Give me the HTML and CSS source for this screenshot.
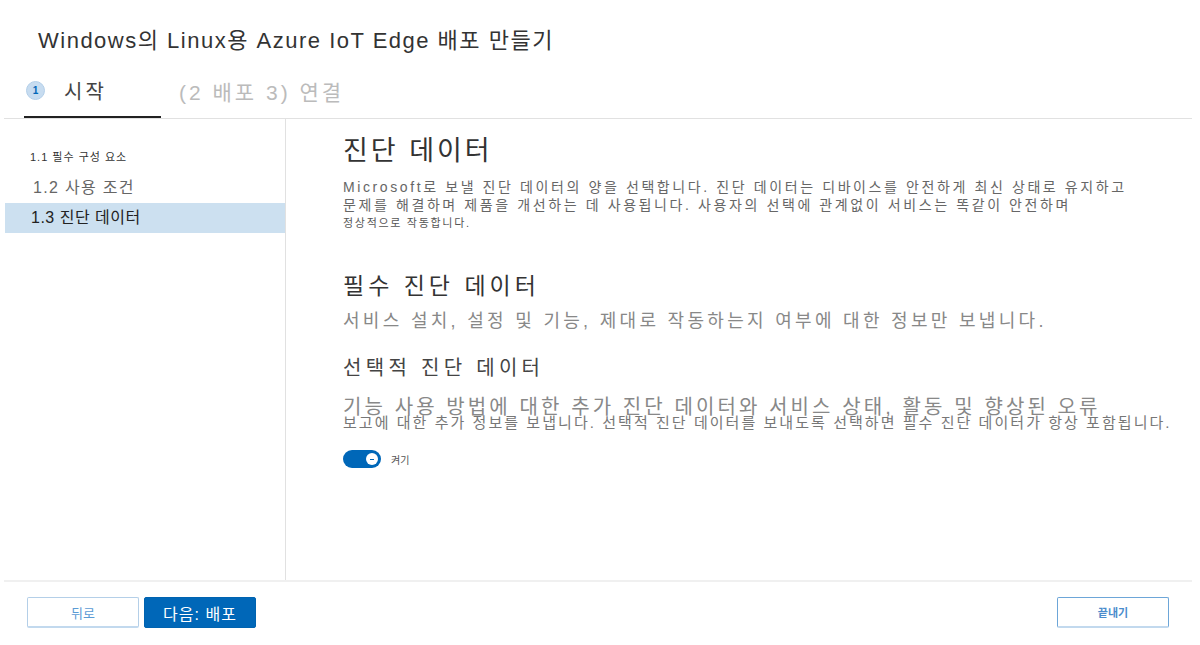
FILE: index.html
```html
<!DOCTYPE html>
<html lang="ko">
<head>
<meta charset="utf-8">
<link rel="stylesheet" href="styles.css">
</head>
<body>
<div class="app">
  <h1 class="title">Windows의 Linux용 Azure IoT Edge 배포 만들기</h1>
  <div class="stepper">
    <div class="step active"><span class="num">1</span><span class="label">시작</span></div>
    <div class="step rest">(2 배포 3) 연결</div>
  </div>
  <div class="main">
    <nav class="nav">
      <div class="nav-item small">1.1 필수 구성 요소</div>
      <div class="nav-item">1.2 사용 조건</div>
      <div class="nav-item selected">1.3 진단 데이터</div>
    </nav>
    <section class="content">
      <h2 class="h-main">진단 데이터</h2>
      <p class="desc">Microsoft로 보낼 진단 데이터의 양을 선택합니다. 진단 데이터는 디바이스를 안전하게 최신 상태로 유지하고<br>문제를 해결하며 제품을 개선하는 데 사용됩니다. 사용자의 선택에 관계없이 서비스는 똑같이 안전하며</p>
      <p class="desc-small">정상적으로 작동합니다.</p>
      <h3 class="h-req">필수 진단 데이터</h3>
      <p class="req-desc">서비스 설치, 설정 및 기능, 제대로 작동하는지 여부에 대한 정보만 보냅니다.</p>
      <h3 class="h-opt">선택적 진단 데이터</h3>
      <p class="opt-1">기능 사용 방법에 대한 추가 진단 데이터와 서비스 상태, 활동 및 향상된 오류</p>
      <p class="opt-2">보고에 대한 추가 정보를 보냅니다. 선택적 진단 데이터를 보내도록 선택하면 필수 진단 데이터가 항상 포함됩니다.</p>
      <div class="toggle-row">
        <span class="toggle"><span class="knob"></span></span>
        <span class="toggle-label">켜기</span>
      </div>
    </section>
  </div>
  <footer class="footer">
    <button class="btn btn-outline">뒤로</button>
    <button class="btn btn-primary">다음: 배포</button>
    <span class="spacer"></span>
    <button class="btn btn-outline finish">끝내기</button>
  </footer>
</div>
</body>
</html>
```

FILE: styles.css
```css
* { box-sizing: border-box; }
html, body { margin: 0; padding: 0; background: #fff; }
body {
  font-family: "Liberation Sans", "Noto Sans CJK KR", sans-serif;
  color: #333;
  width: 1200px;
  height: 645px;
  overflow: hidden;
}
.app { display: flex; flex-direction: column; height: 645px; }
.title {
  margin: 0;
  padding: 27px 0 0 38px;
  height: 68px;
  font-size: 22px;
  font-weight: normal;
  color: #333;
  line-height: 28px;
  letter-spacing: 1.5px;
}
.stepper {
  display: flex;
  align-items: flex-end;
  margin: 0 8px 0 4px;
  height: 51px;
  border-bottom: 1px solid #e1e1e1;
}
.step { display: flex; align-items: center; height: 50px; }
.step.active {
  margin-left: 20px;
  width: 137px;
  border-bottom: 2px solid #222;
  height: 50px;
  padding-bottom: 4px;
}
.num {
  width: 19px; height: 19px; border-radius: 50%;
  background: #c7dcf0;
  border: 1px solid #b3cfe9;
  color: #0067b8;
  font-size: 10px;
  font-weight: bold;
  display: inline-flex; align-items: center; justify-content: center;
  margin-left: 2px;
}
.label { margin-left: 19px; font-size: 20px; color: #444; letter-spacing: 3px; }
.step.rest {
  margin-left: 18px;
  font-size: 21px;
  color: #bbb;
  padding-bottom: 4px;
  letter-spacing: 3px;
}
.main {
  display: flex;
  height: 463px;
  margin: 0 8px 0 4px;
  border-bottom: 2px solid #f0f0f0;
}
.nav {
  width: 282px;
  border-right: 1px solid #e1e1e1;
  padding: 30px 0 0 1px;
}
.nav-item {
  height: 30px;
  line-height: 30px;
  padding-left: 28px;
  font-size: 16px;
  color: #666;
  letter-spacing: 1.3px;
}
.nav-item.small { font-size: 11px; color: #333; padding-left: 25px; height: 24px; line-height: 16px; letter-spacing: 1px; }
.nav-item.selected { background: #cce0f0; color: #222; padding-left: 26px; letter-spacing: 0.5px; }
.content { flex: 1; padding-left: 57px; }
.content p, .content h2, .content h3 { margin: 0; font-weight: normal; }
.h-main { font-size: 27px; color: #333; line-height: 36px; margin-top: 14px !important; letter-spacing: 3px; }
.desc { font-size: 14px; color: #666; line-height: 18px; margin-top: 9px !important; letter-spacing: 2.6px; }
.desc-small { font-size: 11px; color: #555; line-height: 18px; letter-spacing: 1.7px; }
.h-req { font-size: 23px; color: #333; line-height: 30px; margin-top: 39px !important; letter-spacing: 4px; }
.req-desc { font-size: 18px; color: #888; line-height: 26px; margin-top: 7px !important; letter-spacing: 3.3px; }
.h-opt { font-size: 20px; color: #444; line-height: 30px; margin-top: 19px !important; letter-spacing: 4.3px; }
.opt-1 { font-size: 20px; color: #888; line-height: 14px; margin-top: 17px !important; letter-spacing: 3.1px; white-space: nowrap; }
.opt-2 { font-size: 15px; color: #777; line-height: 18px; letter-spacing: 2.05px; white-space: nowrap; }
.toggle-row { display: flex; align-items: center; margin-top: 18px; }
.toggle {
  width: 38px; height: 18px; border-radius: 9px;
  background: #0067b8;
  display: inline-flex; align-items: center; justify-content: flex-end;
  padding-right: 3px;
}
.knob {
  width: 12px; height: 12px; border-radius: 50%; background: #fff;
  display: inline-flex; align-items: center; justify-content: center;
}
.knob::after { content: ""; width: 4px; height: 1px; background: #0067b8; }
.toggle-label { font-size: 10px; color: #555; margin-left: 10px; }
.footer {
  display: flex;
  align-items: center;
  padding: 15px 31px 0 27px;
}
.btn {
  width: 112px; height: 31px;
  font-family: inherit;
  border-radius: 2px;
  cursor: pointer;
  padding: 0;
}
.btn-outline {
  background: #fff;
  border: 1px solid #b4cfe8;
  border-bottom: 2px solid #c2d9ee;
  color: #5b9bd5;
  font-size: 13px;
}
.btn-primary {
  margin-left: 5px;
  background: #0067b8;
  border: 1px solid #0063b0;
  color: #fff;
  font-size: 16px;
  letter-spacing: 1px;
}
.spacer { flex: 1; }
.finish { border-color: #6da6d8; border-bottom-color: #c2d9ee; font-size: 11px; font-weight: bold; color: #4a8ccc; }
```
